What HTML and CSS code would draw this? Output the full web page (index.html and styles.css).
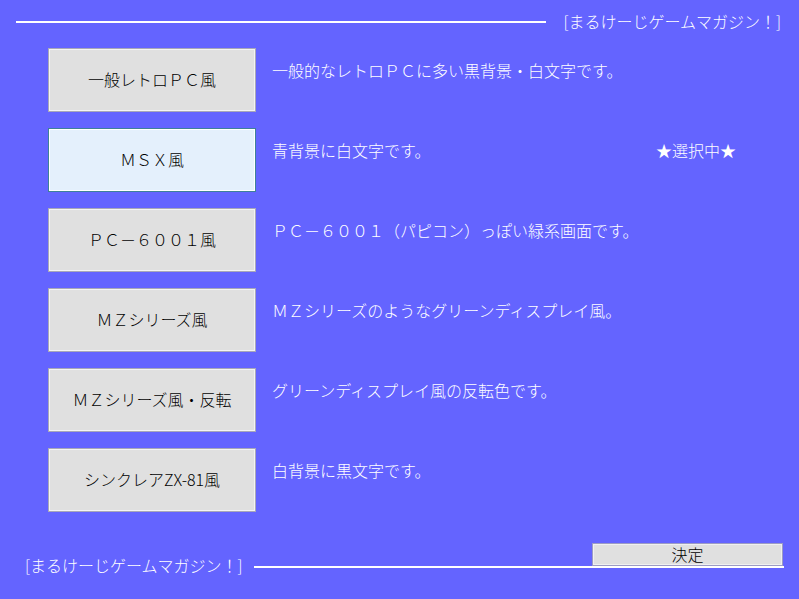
FILE: index.html
```html
<!DOCTYPE html>
<html lang="ja">
<head>
<meta charset="utf-8">
<title>まるけーじゲームマガジン！</title>
<link rel="stylesheet" href="styles.css">
</head>
<body>
<div class="screen">
  <header class="top">
    <div class="rule"></div>
    <div class="brand">[まるけーじゲームマガジン！]</div>
  </header>
  <main class="list">
    <div class="row">
      <div class="btn"><span>一般レトロＰＣ風</span></div>
      <div class="desc">一般的なレトロＰＣに多い黒背景・白文字です。</div>
      <div class="mark"></div>
    </div>
    <div class="row">
      <div class="btn sel"><span>ＭＳＸ風</span></div>
      <div class="desc">青背景に白文字です。</div>
      <div class="mark">★選択中★</div>
    </div>
    <div class="row">
      <div class="btn"><span>ＰＣ－６００１風</span></div>
      <div class="desc">ＰＣ－６００１（パピコン）っぽい緑系画面です。</div>
      <div class="mark"></div>
    </div>
    <div class="row">
      <div class="btn"><span>ＭＺシリーズ風</span></div>
      <div class="desc">ＭＺシリーズのようなグリーンディスプレイ風。</div>
      <div class="mark"></div>
    </div>
    <div class="row">
      <div class="btn"><span>ＭＺシリーズ風・反転</span></div>
      <div class="desc">グリーンディスプレイ風の反転色です。</div>
      <div class="mark"></div>
    </div>
    <div class="row">
      <div class="btn"><span>シンクレアZX-81風</span></div>
      <div class="desc">白背景に黒文字です。</div>
      <div class="mark"></div>
    </div>
  </main>
  <footer class="bottom">
    <div class="brand foot-brand">[まるけーじゲームマガジン！]</div>
    <div class="foot-cell">
      <div class="ok">決定</div>
      <div class="rule"></div>
    </div>
  </footer>
</div>
</body>
</html>
```
FILE: styles.css
```css
html, body {
  margin: 0;
  padding: 0;
  background: #6464ff;
}
body {
  width: 799px;
  height: 599px;
  overflow: hidden;
  font-family: "Noto Sans CJK JP", "Noto Sans", sans-serif;
  font-size: 16px;
  font-weight: 300;
  line-height: 16px;
  color: #ffffff;
}
.screen {
  display: flex;
  flex-direction: column;
}
.top {
  display: flex;
  align-items: center;
  padding: 14px 18px 0 16px;
  height: 16px;
  gap: 17px;
}
.rule {
  flex: 1;
  height: 2px;
  background: #ffffff;
}
.brand {
  white-space: nowrap;
  color: #ffffff;
}
.top .brand {
  padding-bottom: 2px;
}
.list {
  margin-top: 18px;
  padding-left: 48px;
  display: flex;
  flex-direction: column;
  gap: 16px;
}
.row {
  display: grid;
  grid-template-columns: 208px 368px auto;
  column-gap: 16px;
  height: 64px;
}
.btn {
  box-sizing: border-box;
  height: 64px;
  display: flex;
  align-items: center;
  justify-content: center;
  background: #e0e0e0;
  color: #000000;
  border: 1px solid #a8a8b8;
  box-shadow: inset 0 0 0 1px #f4f4f4;
  white-space: nowrap;
}
.btn span {
  padding-bottom: 2px;
}
.btn.sel {
  background: #e4f0fc;
  border-color: #3f8098;
  box-shadow: inset 0 0 0 1px #ffffff;
}
.desc, .mark {
  padding-top: 14px;
  white-space: nowrap;
}
.bottom {
  margin-top: 31px;
  display: flex;
  align-items: flex-end;
  padding-left: 25px;
  padding-right: 15px;
  gap: 11px;
}
.foot-brand {
  margin-bottom: -5px;
}
.foot-cell {
  flex: 1;
  display: flex;
  flex-direction: column;
  align-items: flex-end;
}
.foot-cell .rule {
  flex: none;
  width: 100%;
}
.ok {
  box-sizing: border-box;
  width: 191px;
  height: 23px;
  margin-right: 1px;
  padding-bottom: 2px;
  display: flex;
  align-items: center;
  justify-content: center;
  background: #e0e0e0;
  color: #000000;
  border: 1px solid #9c9cc4;
  box-shadow: inset 0 0 0 1px #f0f0f0;
}
```
